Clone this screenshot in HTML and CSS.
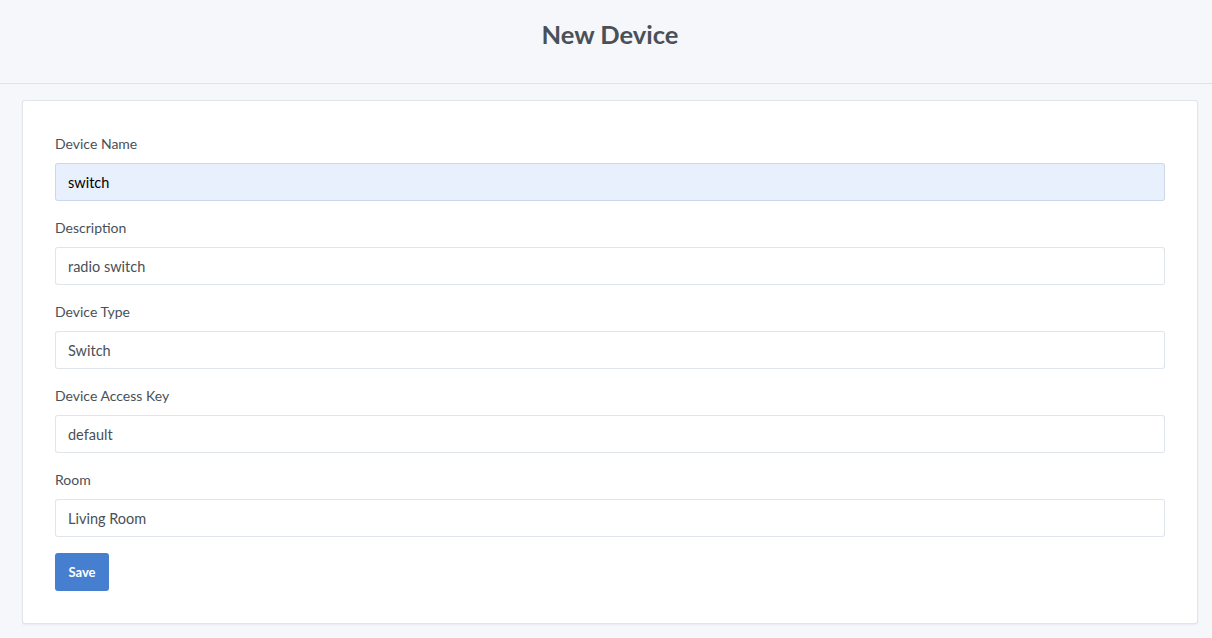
FILE: index.html
```html
<!DOCTYPE html>
<html>
<head>
<meta charset="utf-8">
<link rel="stylesheet" href="styles.css">
</head>
<body>
<header class="topbar"><h1 class="title">New Device</h1></header>
<main class="page">
  <form class="card">
    <div class="field">
      <label class="label">Device Name</label>
      <div class="input input-filled">switch</div>
    </div>
    <div class="field">
      <label class="label">Description</label>
      <div class="input">radio switch</div>
    </div>
    <div class="field">
      <label class="label">Device Type</label>
      <div class="input">Switch</div>
    </div>
    <div class="field">
      <label class="label">Device Access Key</label>
      <div class="input">default</div>
    </div>
    <div class="field">
      <label class="label">Room</label>
      <div class="input">Living Room</div>
    </div>
    <div class="actions"><button type="button" class="btn">Save</button></div>
  </form>
</main>
</body>
</html>
```
FILE: styles.css
```css
* { box-sizing: border-box; }
html, body { margin: 0; padding: 0; }
body {
  background: #f5f7fb;
  font-family: Lato, "Open Sans", sans-serif;
  color: #495057;
  height: 638px;
  overflow: hidden;
}
.topbar {
  height: 84px;
  border-bottom: 1px solid #dfe2e8;
  display: flex;
  align-items: center;
  justify-content: center;
  padding-left: 8px;
}
.title {
  margin: 0;
  font-size: 25.5px;
  font-weight: 700;
  color: #495057;
  padding-bottom: 13px;
  line-height: 1;
}
.page {
  padding: 16px 14px 0 22px;
}
.card {
  background: #fff;
  border: 1px solid rgba(0, 40, 100, 0.12);
  border-radius: 3px;
  box-shadow: 0 1px 2px rgba(0, 0, 0, 0.05);
  padding: 32px;
  display: flex;
  flex-direction: column;
  gap: 16px;
}
.field { display: flex; flex-direction: column; }
.label {
  font-size: 14px;
  line-height: 21px;
  margin-bottom: 9px;
  color: #495057;
}
.input {
  height: 38px;
  border: 1px solid rgba(0, 40, 100, 0.12);
  border-radius: 3px;
  padding: 1px 12px 0;
  display: flex;
  align-items: center;
  font-size: 14.5px;
  color: #495057;
  background: #fff;
}
.input-filled {
  background: #e8f0fe;
  color: #000;
}
.actions { display: flex; }
.btn {
  height: 38px;
  width: 54px;
  border: none;
  border-radius: 3px;
  background: #467fcf;
  color: #fff;
  font-family: inherit;
  font-weight: 700;
  font-size: 13px;
  padding: 0;
}
```
